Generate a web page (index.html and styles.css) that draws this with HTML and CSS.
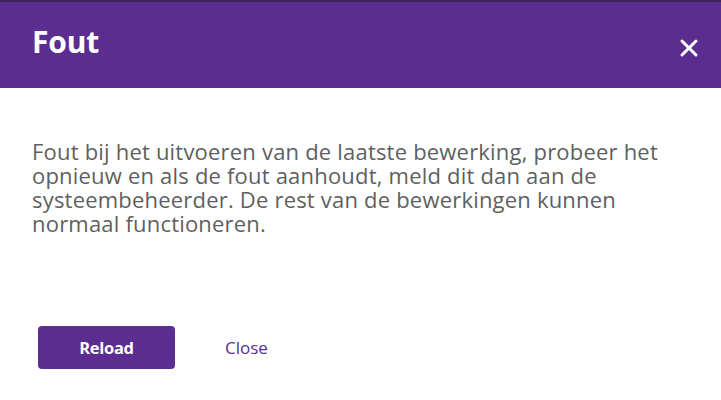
FILE: index.html
```html
<!DOCTYPE html>
<html lang="nl">
<head>
<meta charset="utf-8">
<title>Fout</title>
<link rel="stylesheet" href="styles.css">
</head>
<body>
<div class="dialog">
  <div class="topline"></div>
  <header class="header">
    <h1 class="title">Fout</h1>
    <button class="close-x" aria-label="Sluiten">
      <svg width="20" height="20" viewBox="0 0 20 20"><path d="M3 3 L17 17 M17 3 L3 17" stroke="#fff" stroke-width="3" stroke-linecap="round"/></svg>
    </button>
  </header>
  <div class="body">
    <p class="message">Fout bij het uitvoeren van de laatste bewerking, probeer het opnieuw en als de fout aanhoudt, meld dit dan aan de systeembeheerder. De rest van de bewerkingen kunnen normaal functioneren.</p>
  </div>
  <footer class="actions">
    <button class="btn-primary">Reload</button>
    <button class="btn-link">Close</button>
  </footer>
</div>
</body>
</html>
```
FILE: styles.css
```css
html, body {
  margin: 0;
  padding: 0;
  background: #ffffff;
}
body {
  font-family: "Open Sans", "Noto Sans", sans-serif;
  width: 721px;
  height: 400px;
  overflow: hidden;
}
.dialog {
  display: flex;
  flex-direction: column;
  height: 400px;
}
.topline {
  height: 2px;
  background: #3b2658;
}
.header {
  height: 86px;
  background: #5c2d91;
  display: flex;
  align-items: center;
  justify-content: space-between;
  padding: 0 21px 0 32px;
}
.title {
  margin: 0;
  margin-top: -8px;
  color: #ffffff;
  font-size: 30px;
  font-weight: 700;
  letter-spacing: -0.2px;
}
.close-x {
  background: none;
  border: none;
  padding: 0;
  width: 20px;
  height: 20px;
  margin-top: 6px;
  margin-right: 1px;
  cursor: pointer;
  display: flex;
}
.body {
  padding: 51px 40px 0 32px;
}
.message {
  margin: 0;
  color: #5f5f5f;
  font-size: 22px;
  letter-spacing: 0.2px;
  line-height: 24px;
}
.actions {
  display: flex;
  align-items: center;
  padding: 0 0 0 38px;
  margin-top: 91px;
  gap: 50px;
}
.btn-primary {
  width: 137px;
  height: 43px;
  background: #5c2d91;
  color: #ffffff;
  border: none;
  border-radius: 4px;
  font-family: "Open Sans", sans-serif;
  font-size: 16.5px;
  font-weight: 700;
  letter-spacing: -0.3px;
}
.btn-link {
  background: none;
  border: none;
  padding: 0;
  color: #5c2d91;
  font-family: "Open Sans", sans-serif;
  font-size: 17px;
}
```
